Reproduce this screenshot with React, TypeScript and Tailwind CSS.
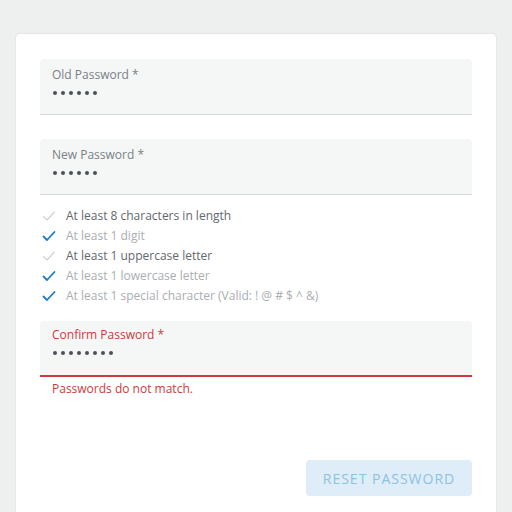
import React from 'react';

// Требования к паролю: met = выполнено (синяя галочка, бледный текст)
const rules = [
  { text: 'At least 8 characters in length', met: false },
  { text: 'At least 1 digit', met: true },
  { text: 'At least 1 uppercase letter', met: false },
  { text: 'At least 1 lowercase letter', met: true },
  { text: 'At least 1 special character (Valid: ! @ # $ ^ &)', met: true },
];

const Check: React.FC<{ met: boolean }> = ({ met }) => (
  <svg width="14" height="14" viewBox="0 0 14 14" fill="none">
    <path
      d="M1.5 7.5 L5 11 L12.5 3"
      stroke={met ? '#1b7bc6' : '#cfd3d5'}
      strokeWidth={met ? 1.8 : 1.2}
      strokeLinecap="round"
      strokeLinejoin="round"
    />
  </svg>
);

const Field: React.FC<{ label: string; dots: number; error?: boolean }> = ({ label, dots, error }) => (
  <div
    className={`h-[56px] rounded-t-[4px] bg-[#f5f7f7] px-3 ${
      error ? 'pt-[6px] border-b-2 border-[#d0393b]' : 'pt-2 border-b border-[#d2d6d8]'
    }`}
  >
    <div className={`text-[12px] leading-4 ${error ? 'text-[#d0393b]' : 'text-[#7a8085]'}`}>{label}</div>
    <div className="flex items-center gap-1 h-5 pl-[1px]">
      {Array.from({ length: dots }).map((_, i) => (
        <span key={i} className="w-[4px] h-[4px] rounded-full bg-[#4b5157]" />
      ))}
    </div>
  </div>
);

export default function App() {
  return (
    <div className="min-h-[512px] bg-[#eef0ef] px-4 pt-[34px] font-['Open_Sans',sans-serif]">
      <div className="bg-white rounded-[4px] shadow-[0_0_2px_rgba(0,0,0,0.12)] px-6 pt-[25px] pb-6">
        <Field label="Old Password *" dots={6} />
        <div className="mt-6">
          <Field label="New Password *" dots={6} />
        </div>

        <ul className="mt-[11px] flex flex-col">
          {rules.map((r) => (
            <li key={r.text} className="flex items-center h-5 text-[12px]">
              <span className="w-[26px] pl-[2px] flex items-center">
                <Check met={r.met} />
              </span>
              <span className={r.met ? 'text-[#a9aeb2]' : 'text-[#62686d]'}>{r.text}</span>
            </li>
          ))}
        </ul>

        <div className="mt-[15px]">
          <Field label="Confirm Password *" dots={8} error />
          <p className="px-3 mt-[2px] text-[12px] leading-5 text-[#d0393b]">Passwords do not match.</p>
        </div>

        <div className="mt-[61px] flex justify-end">
          <button className="h-9 w-[166px] rounded-[4px] bg-[#deedf7] text-[#8cc2e4] text-[14px] tracking-[1px] uppercase">
            Reset Password
          </button>
        </div>
      </div>
    </div>
  );
}
